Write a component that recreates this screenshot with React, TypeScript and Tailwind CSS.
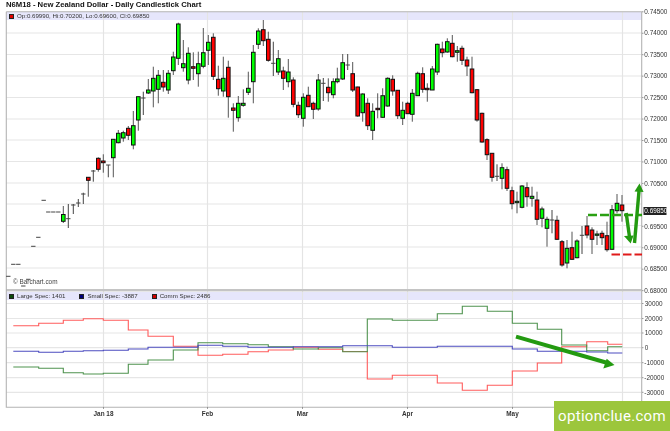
type Candle = [number, number, number, number, number, "g" | "r"];

// x, high, low, body top, body bottom, colour
const candles: Candle[] = [
  [63.3, 206, 223, 214.5, 221.3, "g"], [88.3, 177, 196.7, 177.3, 180.3, "r"], [98.3, 157.3, 171.7, 158.3, 169.3, "r"],
  [103.3, 154.3, 172.7, 161, 162.7, "r"], [113.3, 139.3, 177.3, 139.3, 157.7, "g"], [118.3, 130, 143.3, 133.3, 142.7, "g"],
  [123.3, 130.7, 141.7, 132.7, 138, "g"], [128.3, 126, 140, 128.3, 135.3, "r"], [133.3, 111, 149.3, 125.7, 145, "g"],
  [138.3, 96.7, 130.7, 96.7, 120, "g"], [148.3, 79, 94, 90, 93, "g"], [153.3, 66.7, 107.3, 78.3, 91, "g"],
  [158.3, 70, 103.3, 75.3, 89.3, "g"], [163.3, 70, 91.7, 82.3, 87, "r"], [168.3, 70, 94, 73.3, 90, "g"],
  [173.3, 51.7, 75, 57, 70.7, "g"], [178.3, 22.7, 65, 24, 58.3, "g"], [183.3, 40, 71.7, 63.7, 67.7, "g"],
  [188.3, 47.3, 84.3, 53.3, 80, "g"], [193.3, 52.3, 80, 66.7, 68.3, "r"], [198.3, 51.7, 86.7, 63.7, 73.7, "g"],
  [203.3, 28, 68.3, 52.7, 66.3, "g"], [208.3, 35, 65, 42.3, 50.3, "g"], [213.3, 33.3, 80, 37.3, 76.3, "r"],
  [218.3, 65.7, 95.7, 79.3, 88.7, "r"], [223.3, 56.7, 96.7, 78.3, 91, "g"], [228.3, 60.7, 117.7, 67.3, 96.7, "r"],
  [233.3, 103.3, 131.7, 108, 110.3, "r"], [238.3, 96, 121.7, 103.3, 117.7, "g"], [243.3, 89.3, 106.7, 103.3, 105.3, "g"],
  [248.3, 71.7, 95, 88.3, 92.3, "g"], [253.3, 45, 103.3, 52.3, 81.7, "g"], [258.3, 28.3, 49, 31, 44.3, "g"],
  [263.3, 20, 46, 29.7, 40.7, "r"], [268.3, 31.7, 61.7, 39.3, 60.3, "r"], [278.3, 50, 75, 58.7, 72, "g"],
  [283.3, 66.7, 90, 71, 78.3, "r"], [288.3, 59, 87.3, 72, 81.7, "g"], [293.3, 77.3, 107.3, 80, 104.3, "r"],
  [298.3, 101.7, 118, 105.3, 114.7, "r"], [303.3, 93.3, 126.7, 97.3, 118.3, "g"], [308.3, 86.7, 107, 95.3, 106.7, "r"],
  [313.3, 101.7, 119, 103.3, 109.3, "r"], [318.3, 74, 110.7, 80, 109, "g"], [328.3, 78.3, 101.7, 87.3, 92.7, "r"],
  [333.3, 78.3, 98.3, 81.7, 94.7, "g"], [337.3, 67.7, 83.3, 79, 81.7, "g"], [342.7, 54, 80, 62.7, 79, "g"],
  [352.7, 62, 92, 73.7, 90, "r"], [357.7, 86.7, 116.7, 87, 116, "r"], [362.7, 93.3, 121.7, 94, 112.7, "g"],
  [367.7, 98.3, 130, 103.3, 125.7, "r"], [372.7, 103.3, 140, 111.3, 130.3, "g"], [377.7, 93.3, 118.3, 108.3, 109.7, "r"],
  [382.7, 88.3, 118, 95.7, 117.3, "g"], [387.7, 77.3, 106.7, 78.3, 106, "g"], [392.7, 75.3, 95.7, 79.3, 91, "r"],
  [397.7, 90, 119, 90.3, 115.7, "r"], [402.7, 101.7, 125, 110.3, 118.3, "g"], [407.7, 101.7, 114, 103.3, 113.7, "r"],
  [412.3, 89, 121.7, 93.3, 114.3, "g"], [417.7, 71.7, 95.7, 73.3, 95.7, "g"], [422.7, 67.3, 92.7, 73.7, 89.3, "r"],
  [427.3, 83.3, 101.7, 88.3, 89.7, "r"], [432.3, 66, 90, 69, 90, "g"], [437.3, 43.7, 75, 44.3, 72, "g"],
  [442.3, 41.7, 57.3, 49, 52.7, "r"], [447.3, 38.3, 52.7, 41.7, 52, "g"], [452.3, 35, 57.3, 43.3, 56.7, "r"],
  [457.3, 46, 61.7, 50.7, 52.3, "g"], [462, 45.7, 65, 48.3, 60.3, "r"], [467, 56.7, 76, 60, 66, "r"],
  [472, 56.7, 93.3, 69, 92.7, "r"], [477, 89, 121.7, 89.7, 120, "r"], [482, 112.7, 142.7, 113.3, 142, "r"],
  [487, 138.3, 160, 139.7, 154.7, "r"], [492, 153.3, 181.7, 153.3, 177.3, "r"], [502, 163.3, 189.3, 167.7, 178.3, "g"],
  [507, 166.7, 191, 169.7, 188.3, "r"], [512, 186.7, 209.3, 190.7, 203.7, "r"], [517, 191.7, 213.3, 201.3, 202.7, "g"],
  [522, 185, 208.3, 186, 207.3, "g"], [527, 182.3, 206.7, 187.7, 196.7, "r"], [532, 186.7, 206.7, 196.3, 198.3, "g"],
  [537, 191.7, 225, 200, 219.3, "r"], [542, 206.7, 227.3, 209, 218.3, "g"], [547, 216.7, 246.7, 219.3, 228.3, "g"],
  [557, 215.7, 240, 220.3, 239.3, "r"], [562, 240, 266.7, 241.7, 265, "r"], [567, 240, 268.3, 248.3, 263, "g"],
  [572, 231.7, 260, 247.7, 259.3, "r"], [577, 239.3, 258.3, 241, 257.7, "g"], [587, 216, 238.3, 226, 235, "r"],
  [592, 227.3, 254, 230, 239.3, "r"], [597, 230.7, 245, 234, 235.3, "g"], [602, 230.7, 245, 233.3, 237.7, "r"],
  [607, 221.7, 251.7, 235.7, 249.7, "r"], [612, 205, 250, 209.7, 249.3, "g"], [617, 194, 213.3, 203.3, 210.7, "g"],
  [622, 195, 221.7, 205, 210.7, "r"],
];

// x, high, low, tick y: days with no real body
const ticks: number[][] = [
  [8.3, 276.3, 276.3, 276.3], [13.3, 264.3, 264.3, 264.3], [18.3, 264.3, 264.3, 264.3], [23.3, 286, 286, 286],
  [28.3, 279.3, 279.3, 279.3], [33.3, 246.3, 246.3, 246.3], [38.3, 237.3, 237.3, 237.3], [43.7, 200.3, 200.3, 200.3],
  [48.3, 212, 212, 212], [53.3, 212, 212, 212], [58.3, 212, 212, 212], [68.3, 204, 228, 218.7], [73.3, 204, 214, 205],
  [78.3, 199, 207, 203], [83.3, 192.7, 204, 194], [93.3, 170, 181.7, 171], [108.3, 165, 177.3, 165], [143.3, 91.7, 115, 98],
  [273.3, 41.7, 76, 63.3], [323.3, 78, 101, 83.3], [347.7, 54, 70, 65], [497, 164.3, 181, 176.3], [552, 210, 233.3, 220],
  [582, 226, 254, 235.3],
];

const priceGrid = [33, 54.5, 76, 97.5, 119, 140, 161.5, 183, 204, 225.5, 247, 268];
const priceLabels = ["0.74500", "0.74000", "0.73500", "0.73000", "0.72500", "0.72000", "0.71500", "0.71000", "0.70500", "", "0.69500", "0.69000", "0.68500", "0.68000"];
const cotGrid = [303.5, 318.5, 333, 347.7, 362.7, 377.7, 392.3];
const cotLabels = ["30000", "20000", "10000", "0", "-10000", "-20000", "-30000"];
const months: [string, number][] = [["Jan 18", 103.5], ["Feb", 207.5], ["Mar", 302.5], ["Apr", 407.5], ["May", 512.5]];
const monthLines = [...months.map((m) => m[1]), 622.5];

const steps = (pts: number[][], end: number) =>
  pts.map(([x, y], i) => `${i ? "L" : "M"}${x} ${y} H${i < pts.length - 1 ? pts[i + 1][0] : end}`).join(" ");

const redLine = [[13.3, 325.7], [38.7, 323.3], [63.3, 320.3], [83.3, 318.7], [103.3, 320.3], [128.3, 330], [148, 336.3], [173.3, 346.3], [198, 355.3], [222.7, 354.3], [248, 351.7], [268.3, 350], [293.3, 347.3], [318.3, 349.3], [342.7, 351.5], [367.3, 379], [392.3, 375.3], [437.3, 383], [462.3, 390.3], [487.3, 385.3], [512.3, 371], [537.3, 363], [561.7, 346.7], [586.7, 341.7], [607.7, 344.3]];
const greenLine = [[13.3, 367], [38.7, 368.3], [63.3, 372.7], [83.3, 374], [103.3, 373.3], [128.3, 364.3], [148, 360], [173.3, 350], [198, 342.7], [222.7, 343.7], [248, 344.7], [268.3, 346.7], [293.3, 349], [318.3, 347.7], [342.7, 351.7], [367.3, 319], [392.3, 320.3], [437.3, 313.7], [462.3, 306.3], [487.3, 311.3], [512.3, 323.3], [537.3, 329.3], [561.7, 345], [586.7, 350.7], [607.7, 346.7]];
const blueLine = [[13.3, 351.3], [38.7, 352.3], [63.3, 351.3], [83.3, 350.7], [103.3, 350.3], [128.3, 349], [148, 347.3], [198, 345.3], [222.7, 346.3], [248, 347.3], [293.3, 346.7], [342.7, 345.7], [392.3, 347.3], [437.3, 346.3], [512.3, 349], [537.3, 351.3], [586.7, 352], [607.7, 353]];

const Chart = () => (
  <svg width="670" height="431" className="absolute left-0 top-0 block">
    <rect x="6" y="12" width="636" height="8" fill="#e6e6fb" />
    <rect x="6" y="292" width="636" height="8" fill="#e6e6fb" />
    {[...priceGrid, ...cotGrid].map((y) => (
      <line key={y} x1="6" x2="642" y1={y} y2={y} stroke="#e6e6e6" strokeWidth="1.2" />
    ))}
    {monthLines.map((x) => (
      <line key={x} x1={x} x2={x} y1="12" y2="407" stroke="#e4e4e4" strokeWidth="1.2" />
    ))}
    <rect x="6" y="289" width="636" height="2.4" fill="#c4c4c4" />
    <path d="M6.3 11.7 V407.3 H641.7 V11.7 H6.3" fill="none" stroke="#b4b4b4" strokeWidth="1.1" />

    {ticks.map(([x, hi, lo, y]) => (
      <g key={x} stroke="#444" strokeWidth="1">
        {hi !== lo && <line x1={x} x2={x} y1={hi} y2={lo} />}
        <line x1={x - 2.2} x2={x + 2.2} y1={y} y2={y} />
      </g>
    ))}
    {candles.map(([x, hi, lo, top, bot, c]) => (
      <g key={x}>
        <line x1={x} x2={x} y1={hi} y2={lo} stroke="#555" strokeWidth="1" />
        <rect
          x={x - 1.8}
          y={top}
          width="3.6"
          height={Math.max(bot - top, 0.8)}
          fill={c === "g" ? "#00ff00" : "#ff0000"}
          stroke="#111"
          strokeWidth="1"
        />
      </g>
    ))}

    <path d={steps(redLine, 622.3)} fill="none" stroke="#ff5c5c" strokeWidth="1.1" />
    <path d={steps(greenLine, 622.3)} fill="none" stroke="#4f934f" strokeWidth="1.1" />
    <path d={steps(blueLine, 622.3)} fill="none" stroke="#4c4cc0" strokeWidth="1.1" />

    {/* annotations drawn over the chart */}
    <line x1="588" x2="642" y1="215" y2="215" stroke="#2aa012" strokeWidth="2.5" strokeDasharray="9 3" />
    <line x1="611.5" x2="642" y1="254.5" y2="254.5" stroke="#e01a1a" strokeWidth="2.2" strokeDasharray="8.5 3" />
    <path d="M634.5 243 L639 191" stroke="#239a10" strokeWidth="3.4" />
    <path d="M634.5 191.5 L639.5 183.5 L643.6 192 Z" fill="#239a10" />
    <path d="M626.2 213 L629.5 237" stroke="#239a10" strokeWidth="3.4" />
    <path d="M624 236 L633.5 235.5 L630.7 243.5 Z" fill="#239a10" />
    <path d="M516 336.7 L606 362.5" stroke="#239a10" strokeWidth="4" />
    <path d="M603.3 368.6 L606.7 358.8 L614.5 365 Z" fill="#239a10" />

    <g className="text-[6.4px]" fill="#333">
      {priceLabels.map((t, i) => (
        <g key={i}>
          {t && <line x1="642" x2="643.5" y1={11.8 + i * 21.45} y2={11.8 + i * 21.45} stroke="#777" strokeWidth="0.7" />}
          <text x="644.3" y={14 + i * 21.45}>{t}</text>
        </g>
      ))}
      {cotLabels.map((t, i) => (
        <g key={t}>
          <line x1="642" x2="643.5" y1={cotGrid[i]} y2={cotGrid[i]} stroke="#777" strokeWidth="0.7" />
          <text x={t.startsWith("-") ? 644.3 : 644.8} y={cotGrid[i] + 2.2}>{t}</text>
        </g>
      ))}
      {months.map(([t, x]) => (
        <g key={t}>
          <line x1={x} x2={x} y1="407" y2="409" stroke="#777" strokeWidth="0.7" />
          <text x={x} y="415.5" textAnchor="middle" fontWeight="700">{t}</text>
        </g>
      ))}
      <text x="13" y="284" fill="#444">© Barchart.com</text>
    </g>
    <rect x="643.5" y="207" width="23" height="8" fill="#222" />
    <text x="644.3" y="213" fill="#fff" className="text-[6.4px]">0.69850</text>
  </svg>
);

const LegendItem = ({ color, label }: { color: string; label: string }) => (
  <span className="flex items-center gap-[3px]">
    <span className={`block h-[5px] w-[5px] border-[0.5px] border-[#222] ${color}`} />
    {label}
  </span>
);

export default function App() {
  return (
    <div className="relative h-[431px] w-[670px] overflow-hidden bg-white [font-family:'Liberation_Sans',Arial,sans-serif]">
      <div className="absolute inset-0 blur-[0.4px]">
        <Chart />
        <h1 className="absolute left-[6px] top-0 text-[7.7px] font-bold leading-[10px] text-[#111]">
          N6M18 - New Zealand Dollar - Daily Candlestick Chart
        </h1>
        <div className="absolute left-[9px] top-[12px] flex h-[8px] items-center text-[6.15px] text-[#333]">
          <LegendItem color="bg-[#e00000]" label="Op:0.69990, Hi:0.70200, Lo:0.69600, Cl:0.69850" />
        </div>
        <div className="absolute left-[9px] top-[292px] flex h-[8px] items-center gap-[14px] text-[6.15px] text-[#333]">
          <LegendItem color="bg-[#0a4a0a]" label="Large Spec: 1401" />
          <LegendItem color="bg-[#00007a]" label="Small Spec: -3887" />
          <LegendItem color="bg-[#d00000]" label="Comm Spec: 2486" />
        </div>
      </div>
      <div className="absolute bottom-0 right-0 flex h-[30px] w-[116px] items-center justify-center bg-[#9cc63c] text-[15px] tracking-[0.3px] text-white [font-family:Roboto,sans-serif]">
        optionclue.com
      </div>
    </div>
  );
}
